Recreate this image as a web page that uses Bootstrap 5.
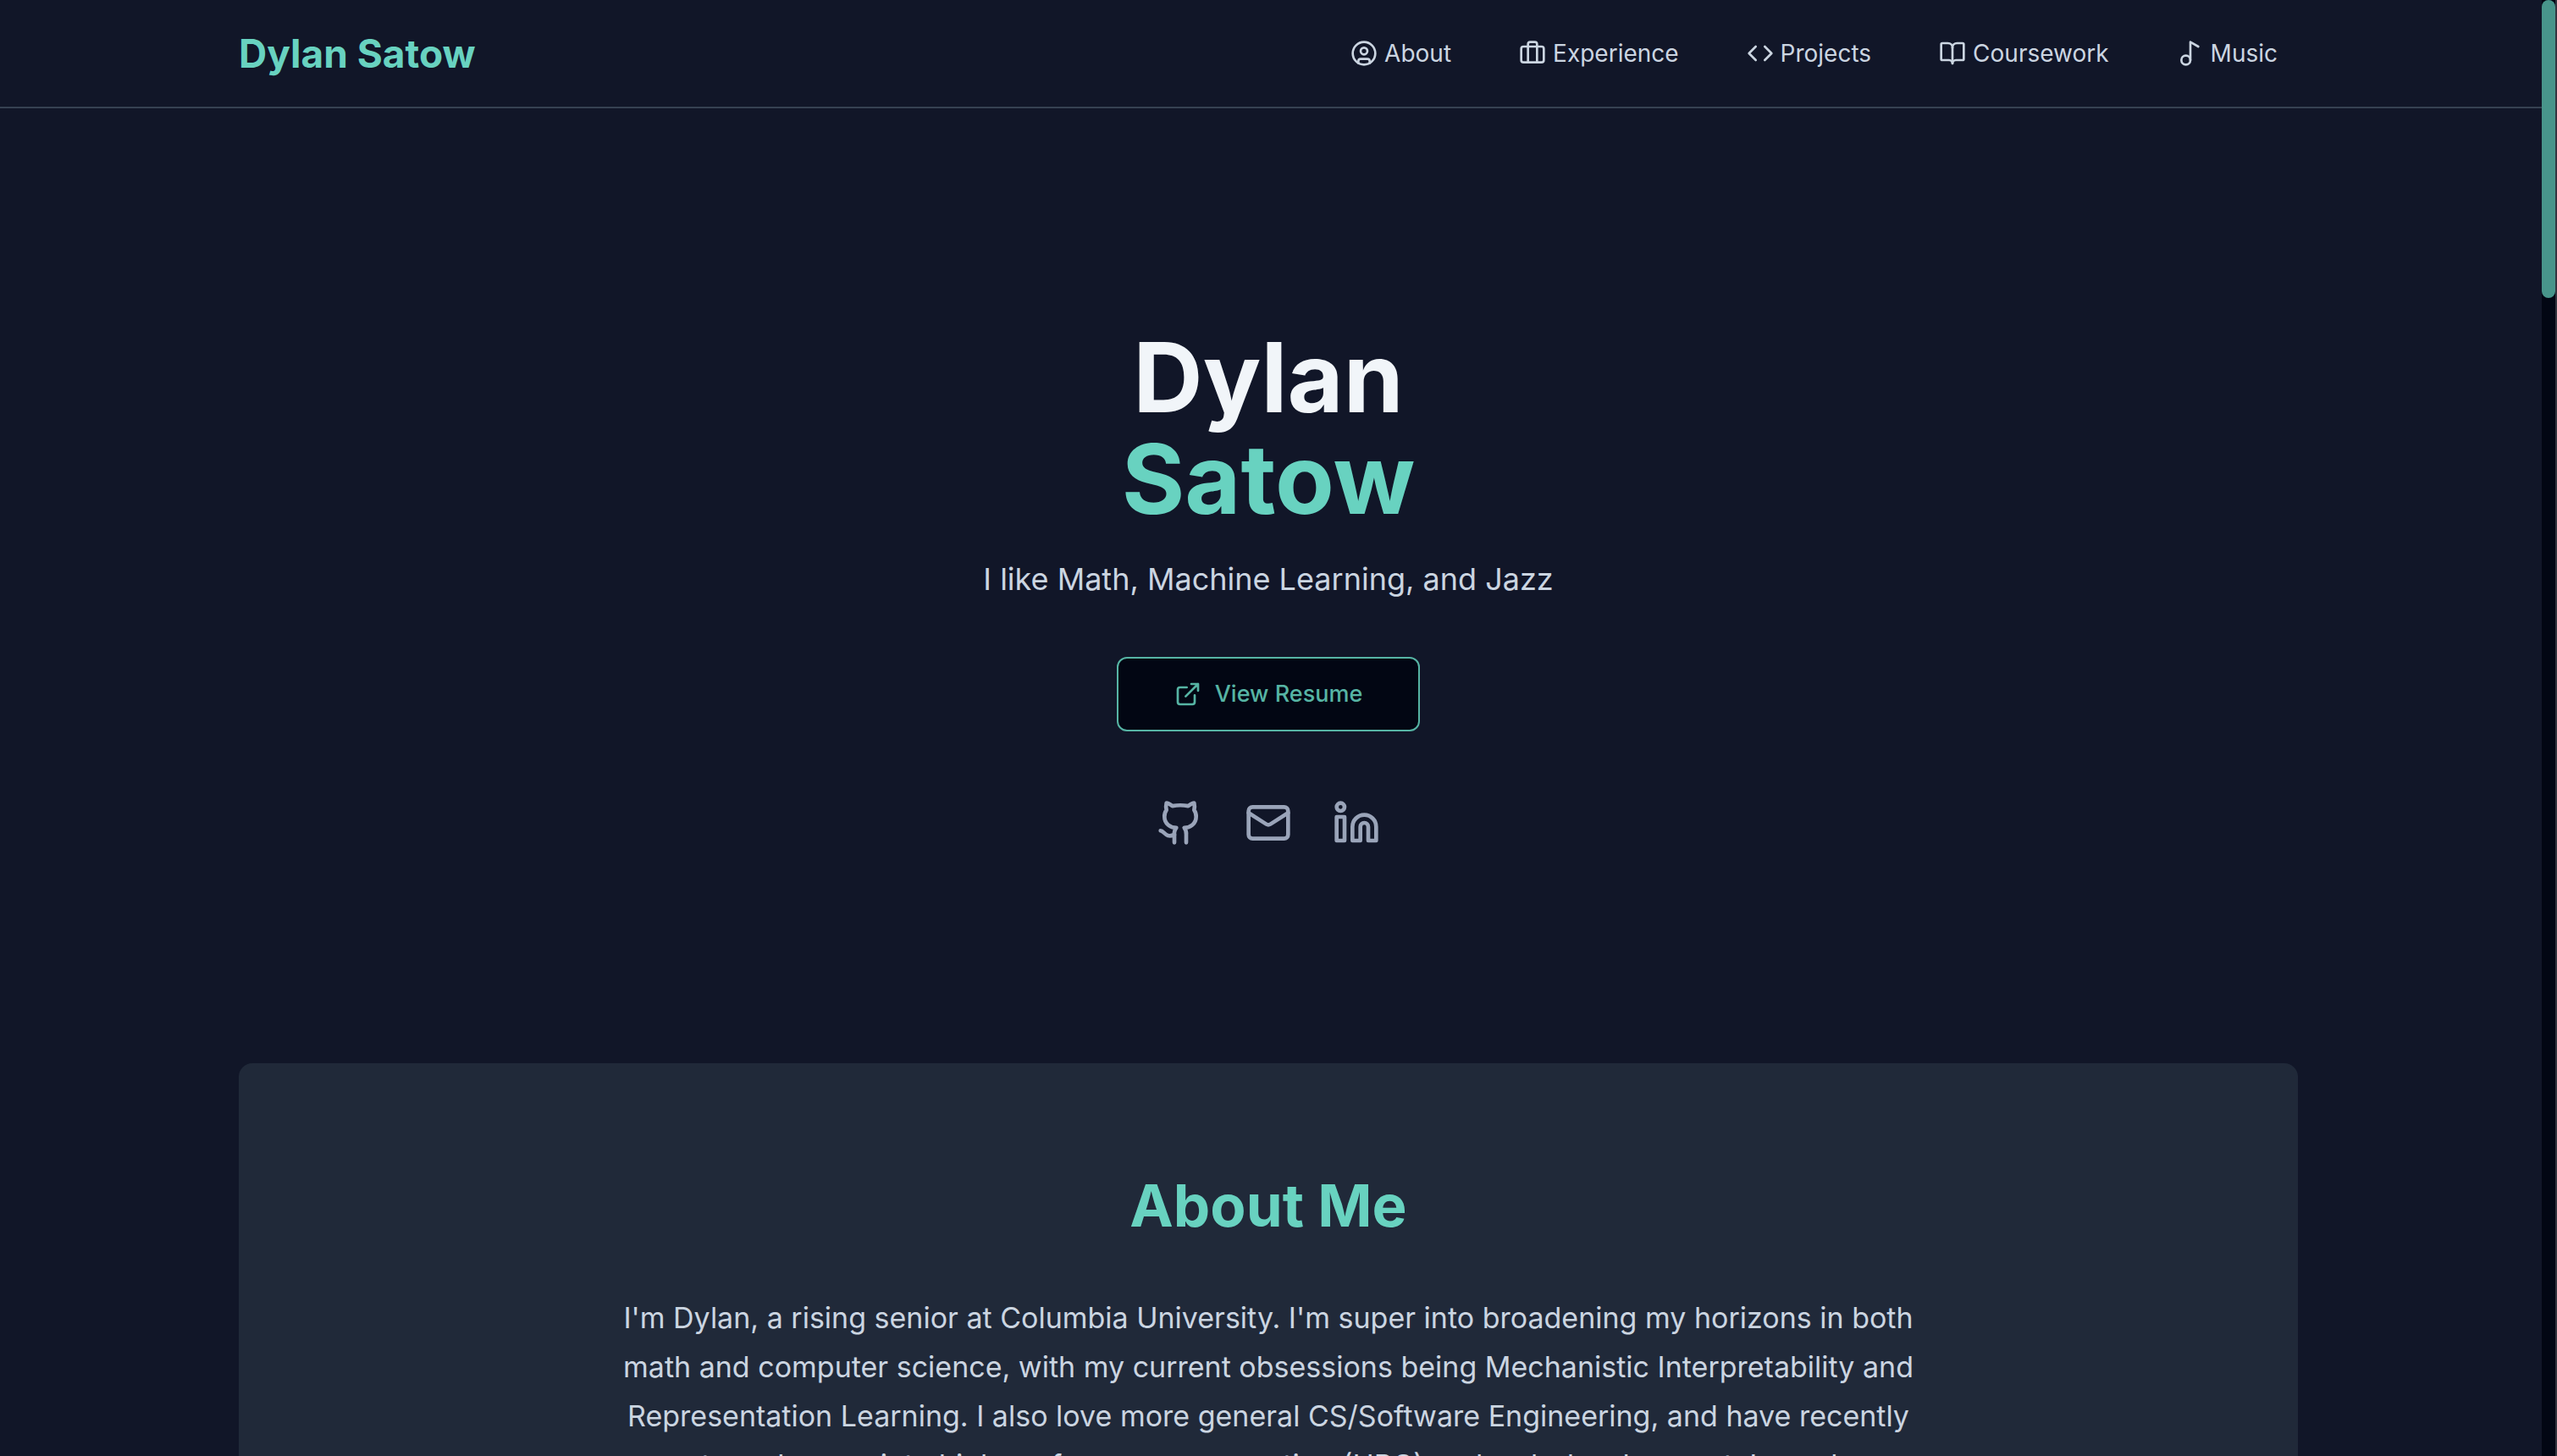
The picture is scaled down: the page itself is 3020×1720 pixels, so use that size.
<!DOCTYPE html>
<html lang="en">
<head>
<meta charset="utf-8">
<meta name="viewport" content="width=device-width, initial-scale=1">
<title>Dylan Satow</title>
<link href="https://cdn.jsdelivr.net/npm/bootstrap@5.3.0/dist/css/bootstrap.min.css" rel="stylesheet">
<style>
  :root { --ink: #111628; --panel: #202939; --teal: #68d2c0; --line: #364152; --soft: #cbd5e1; --muted: #9aa4b9; }
  html, body { height: 100%; }
  body { font-family: Inter, "Liberation Sans", sans-serif; background: var(--ink); color: var(--soft); overflow: hidden; }
  a { color: inherit; text-decoration: none; }
  svg { fill: none; stroke: currentColor; stroke-width: 2; stroke-linecap: round; stroke-linejoin: round; flex: none; }
  .page-scroll { overflow: hidden; }
  .site-header { border-bottom: 2px solid var(--line); height: 128px; padding-right: 6px; }
  .wrap { max-width: 2560px; padding: 0 64px; margin: 0 auto; width: 100%; }
  .brand { font-size: 46px; line-height: 64px; font-weight: 700; color: var(--teal); }
  .site-nav { gap: 80px; font-size: 28px; line-height: 40px; padding-right: 24px; }
  .site-nav a { gap: 8px; }
  .site-nav svg { width: 32px; height: 32px; }
  .site-main { padding-right: 6px; }
  .hero { padding: 258px 0 256px; }
  .hero-name { font-size: 114px; line-height: 120px; font-weight: 700; color: #f1f5f9; margin: 0 0 30px; }
  .hero-name span { color: var(--teal); }
  .tagline { font-size: 36px; line-height: 56px; margin: 0 0 64px; }
  .resume, .resume:hover { background: #020613; border: 2px solid #56b4a4; color: #56b4a4; }
  .resume { border-radius: 12px; height: 88px; padding: 0 66px; font-size: 27px; font-weight: 500; gap: 16px; }
  .resume svg { width: 32px; height: 32px; }
  .socials { gap: 48px; margin-top: 80px; color: var(--muted); }
  .socials svg { width: 56px; height: 56px; }
  .about { background: var(--panel); border-radius: 16px; padding: 128px 0; }
  .about h2 { font-size: 69px; line-height: 80px; font-weight: 700; color: var(--teal); margin: 0 0 64px; }
  .about p { font-size: 34px; line-height: 58px; max-width: 1600px; margin: 0 auto; }
  .rail { width: 18px; background: #020613; border-right: 2px solid #33353f; }
  .rail-thumb { width: 16px; height: 352px; border-radius: 8px; background: #48958b; }
</style>
</head>
<body class="d-flex">
<div class="page-scroll flex-grow-1">
  <header class="site-header d-flex align-items-center">
    <div class="wrap d-flex align-items-center justify-content-between">
      <a class="brand" href="#top">Dylan Satow</a>
      <nav class="site-nav d-flex">
        <a class="d-flex align-items-center" href="#about"><svg viewBox="0 0 24 24"><circle cx="12" cy="12" r="10"/><circle cx="12" cy="10" r="3"/><path d="M7 20.662V19a2 2 0 0 1 2-2h6a2 2 0 0 1 2 2v1.662"/></svg>About</a>
        <a class="d-flex align-items-center" href="#experience"><svg viewBox="0 0 24 24"><rect x="2" y="6" width="20" height="14" rx="2"/><path d="M16 20V4a2 2 0 0 0-2-2h-4a2 2 0 0 0-2 2v16"/></svg>Experience</a>
        <a class="d-flex align-items-center" href="#projects"><svg viewBox="0 0 24 24"><path d="m16 18 6-6-6-6M8 6l-6 6 6 6"/></svg>Projects</a>
        <a class="d-flex align-items-center" href="#coursework"><svg viewBox="0 0 24 24"><path d="M12 7v14"/><path d="M3 18a1 1 0 0 1-1-1V4a1 1 0 0 1 1-1h5a4 4 0 0 1 4 4 4 4 0 0 1 4-4h5a1 1 0 0 1 1 1v13a1 1 0 0 1-1 1h-6a3 3 0 0 0-3 3 3 3 0 0 0-3-3z"/></svg>Coursework</a>
        <a class="d-flex align-items-center" href="#music"><svg viewBox="0 0 24 24"><circle cx="8" cy="18" r="4"/><path d="M12 18V2l7 4"/></svg>Music</a>
      </nav>
    </div>
  </header>
  <main class="site-main" id="top">
    <div class="wrap text-center">
      <section class="hero d-flex flex-column align-items-center">
        <h1 class="hero-name">Dylan<br><span>Satow</span></h1>
        <p class="tagline">I like Math, Machine Learning, and Jazz</p>
        <button type="button" class="btn resume d-flex align-items-center"><svg viewBox="0 0 24 24"><path d="M15 3h6v6M10 14 21 3M18 13v6a2 2 0 0 1-2 2H5a2 2 0 0 1-2-2V8a2 2 0 0 1 2-2h6"/></svg>View Resume</button>
        <div class="socials d-flex">
          <a href="#github" aria-label="GitHub"><svg class="d-block" viewBox="0 0 24 24"><path d="M15 22v-4a4.800 4.800 0 0 0-1-3.500c3 0 6-2 6-5.500.080-1.250-.270-2.480-1-3.500.280-1.150.280-2.350 0-3.500 0 0-1 0-3 1.500-2.640-.500-5.360-.500-8 0C6 2 5 2 5 2c-.300 1.150-.300 2.350 0 3.500A5.403 5.403 0 0 0 4 9c0 3.500 3 5.500 6 5.500-.390.490-.680 1.050-.850 1.650-.170.600-.220 1.230-.150 1.850v4"/><path d="M9 18c-4.510 2-5-2-7-2"/></svg></a>
          <a href="#mail" aria-label="Email"><svg class="d-block" viewBox="0 0 24 24"><rect x="2" y="4" width="20" height="16" rx="2"/><path d="m22 7-8.970 5.700a1.940 1.940 0 0 1-2.060 0L2 7"/></svg></a>
          <a href="#linkedin" aria-label="LinkedIn"><svg class="d-block" viewBox="0 0 24 24"><path d="M16 8a6 6 0 0 1 6 6v7h-4v-7a2 2 0 0 0-4 0v7h-4v-7a6 6 0 0 1 6-6z"/><rect x="2" y="9" width="4" height="12"/><circle cx="4" cy="4" r="2"/></svg></a>
        </div>
      </section>
      <section class="about" id="about">
        <h2>About Me</h2>
        <p>I'm Dylan, a rising senior at Columbia University. I'm super into broadening my horizons in both<br>math and computer science, with my current obsessions being Mechanistic Interpretability and<br>Representation Learning. I also love more general CS/Software Engineering, and have recently<br>got much more into high performance computing (HPC) and web development. I am also</p>
      </section>
    </div>
  </main>
</div>
<div class="rail flex-shrink-0" aria-hidden="true"><div class="rail-thumb"></div></div>
<script src="https://cdn.jsdelivr.net/npm/bootstrap@5.3.0/dist/js/bootstrap.bundle.min.js"></script>
</body>
</html>
